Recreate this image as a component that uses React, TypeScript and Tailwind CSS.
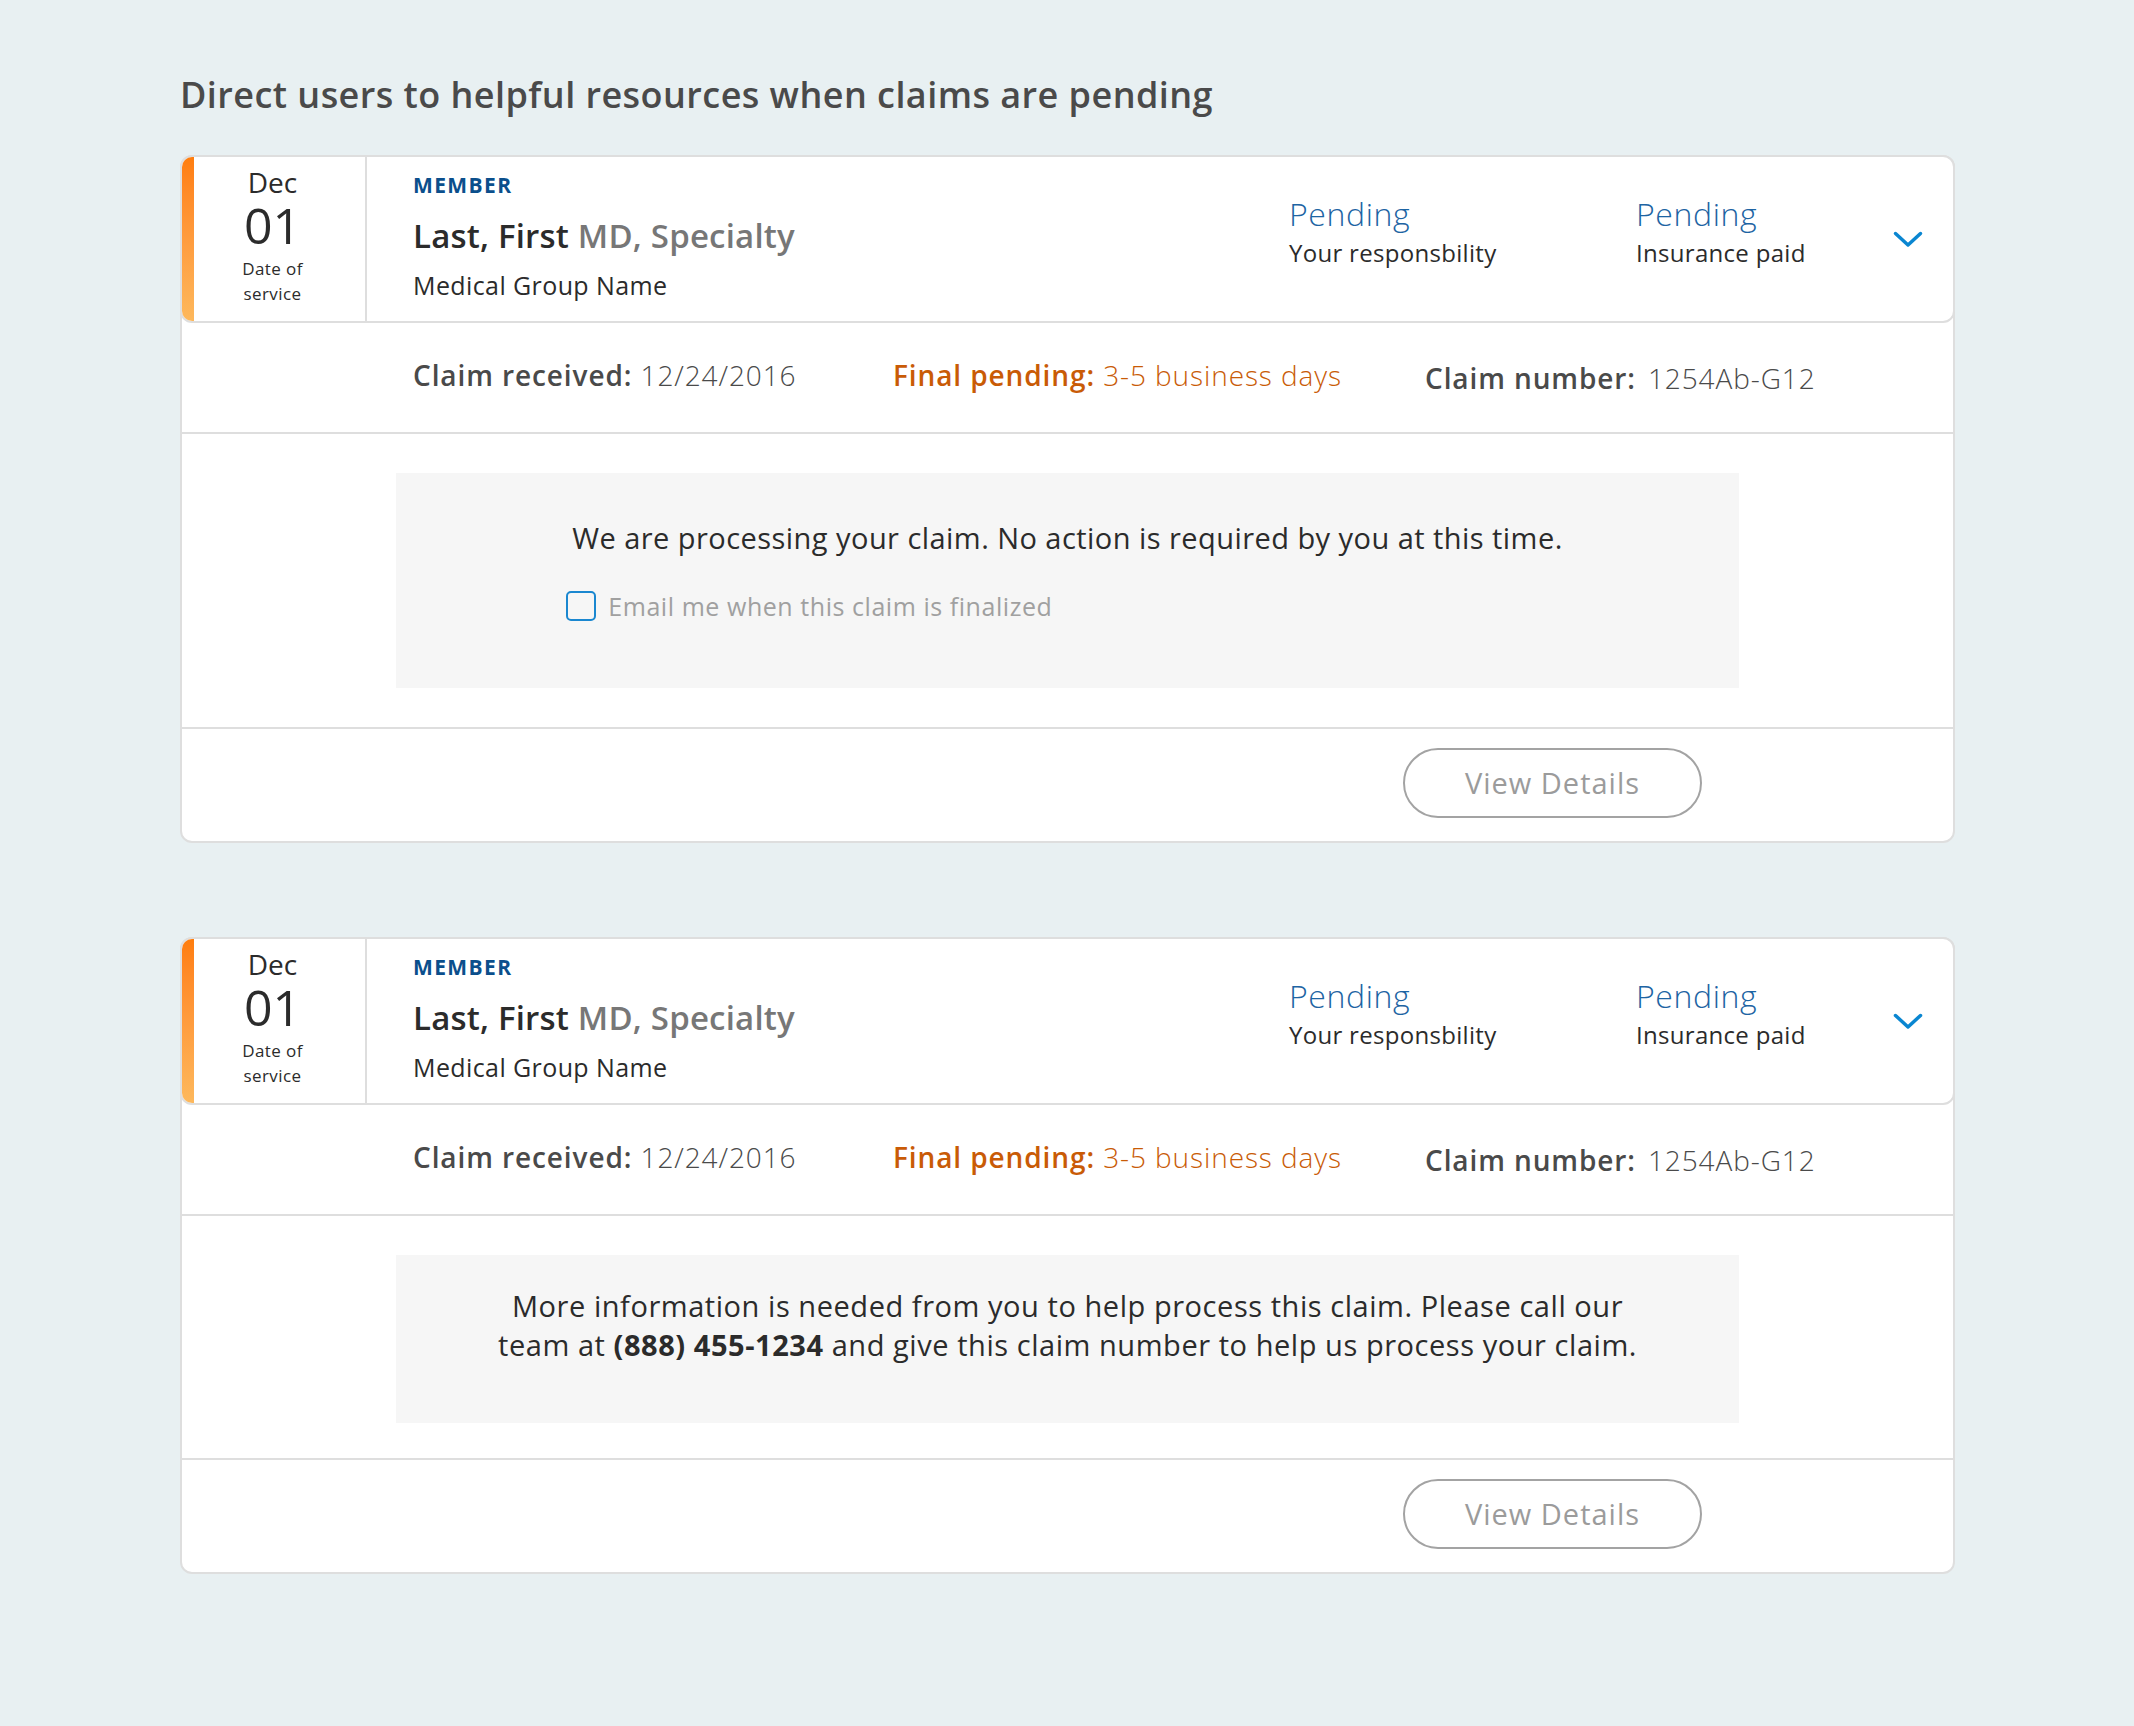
import React from "react";

const FONT = { fontFamily: "'Open Sans', Lato, sans-serif" };

function Chevron() {
  return (
    <svg width="30" height="17" viewBox="0 0 30 17" fill="none">
      <polyline points="2.5,2.5 15,14 27.5,2.5" stroke="#0a86d1" strokeWidth="3.5" strokeLinecap="round" strokeLinejoin="round" />
    </svg>
  );
}

function ClaimCard({ children, boxClass, msgClass }: { children: React.ReactNode; boxClass: string; msgClass: string }) {
  return (
    <div className="w-[1775px] rounded-[12px] border-2 border-[#dedede] bg-white">
      {/* header */}
      <div className="-mx-[2px] -mt-[2px] flex h-[168px] overflow-hidden rounded-[12px] border-2 border-[#dedede] bg-white">
        <div className="w-[12px] shrink-0 bg-gradient-to-b from-[#ff7d0c] to-[#fdb85c]" />
        <div className="flex w-[173px] shrink-0 flex-col items-center border-r-2 border-[#dedede] pr-[14px] pt-[9px] text-[#2b2b2b]">
          <div className="text-[28px] leading-[32px]">Dec</div>
          <div className="mt-[1px] text-[50px] leading-[52px]">01</div>
          <div className="mt-[5px] text-center text-[17px] leading-[25px] tracking-[0.4px]">
            Date of
            <br />
            service
          </div>
        </div>
        <div className="flex-1 pl-[46px] pt-[16px]">
          <div className="text-[21px] font-bold leading-[24px] tracking-[1.4px] text-[#0b4f8c]">MEMBER</div>
          <div className="mt-[19px] text-[33px] font-semibold leading-[40px] tracking-[0.2px] text-[#2b2b2b]">
            Last, First <span className="text-[#777777]">MD, Specialty</span>
          </div>
          <div className="mt-[15px] text-[25px] leading-[28px] tracking-[0.4px] text-[#2b2b2b]">Medical Group Name</div>
        </div>
        <div className="w-[347px] shrink-0 pt-[40px]">
          <div className="text-[32px] font-light leading-[34px] tracking-[0.6px] text-[#1d64a3]">Pending</div>
          <div className="mt-[7px] text-[24px] leading-[30px] tracking-[0.3px] text-[#2b2b2b]">Your responsbility</div>
        </div>
        <div className="w-[257px] shrink-0 pt-[40px]">
          <div className="text-[32px] font-light leading-[34px] tracking-[0.6px] text-[#1d64a3]">Pending</div>
          <div className="mt-[7px] text-[24px] leading-[30px] tracking-[0.3px] text-[#2b2b2b]">Insurance paid</div>
        </div>
        <div className="flex w-[60px] shrink-0 items-center pr-[30px]">
          <Chevron />
        </div>
      </div>

      {/* claim info */}
      <div className="flex h-[111px] items-center border-b-2 border-[#dedede] pb-[5px] pl-[231px] text-[28px] tracking-[0.9px] text-[#4a4a4a]">
        <div className="w-[480px] shrink-0">
          <span className="font-semibold">Claim received:</span> <span className="font-light">12/24/2016</span>
        </div>
        <div className="w-[532px] shrink-0 text-[#c95b06]">
          <span className="font-semibold">Final pending:</span> <span className="font-light">3-5 business days</span>
        </div>
        <div className="mt-[6px]">
          <span className="font-semibold">Claim number:</span>
          <span className="ml-[12px] font-light">1254Ab-G12</span>
        </div>
      </div>

      {/* message */}
      <div className={`border-b-2 border-[#dedede] pt-[39px] ${msgClass}`}>
        <div className={`mx-auto w-[1343px] bg-[#f6f6f6] ${boxClass}`}>{children}</div>
      </div>

      {/* footer */}
      <div className="flex h-[112px] justify-end pr-[251px] pt-[19px]">
        <button className="h-[70px] w-[299px] rounded-full border-2 border-[#a3a3a3] text-[29px] tracking-[1px] text-[#9b9b9b]">
          View Details
        </button>
      </div>
    </div>
  );
}

export default function App() {
  return (
    <div className="min-h-[1726px] w-full bg-[#e8f0f2] pl-[180px] pt-[73px]" style={FONT}>
      <h1 className="mb-[38px] text-[36px] font-semibold leading-[44px] tracking-[0.45px] text-[#4a4a4a]">
        Direct users to helpful resources when claims are pending
      </h1>

      <ClaimCard boxClass="h-[215px] pt-[45px]" msgClass="pb-[39px]">
        <div className="mx-auto w-fit">
          <div className="text-[29px] leading-[40px] tracking-[0.45px] text-[#2b2b2b]">
            We are processing your claim. No action is required by you at this time.
          </div>
          <label className="-ml-[6px] mt-[33px] flex items-center gap-[12px]">
            <span className="h-[30px] w-[30px] rounded-[5px] border-2 border-[#1a87d0]" />
            <span className="text-[25px] leading-[30px] tracking-[0.55px] text-[#a0a0a0]">Email me when this claim is finalized</span>
          </label>
        </div>
      </ClaimCard>

      <div className="h-[94px]" />

      <ClaimCard boxClass="h-[168px] pt-[31px]" msgClass="pb-[35px]">
        <div className="text-center text-[29px] leading-[39px] tracking-[0.55px] text-[#2b2b2b]">
          More information is needed from you to help process this claim. Please call our
          <br />
          team at <span className="font-bold">(888) 455-1234</span> and give this claim number to help us process your claim.
        </div>
      </ClaimCard>
    </div>
  );
}
